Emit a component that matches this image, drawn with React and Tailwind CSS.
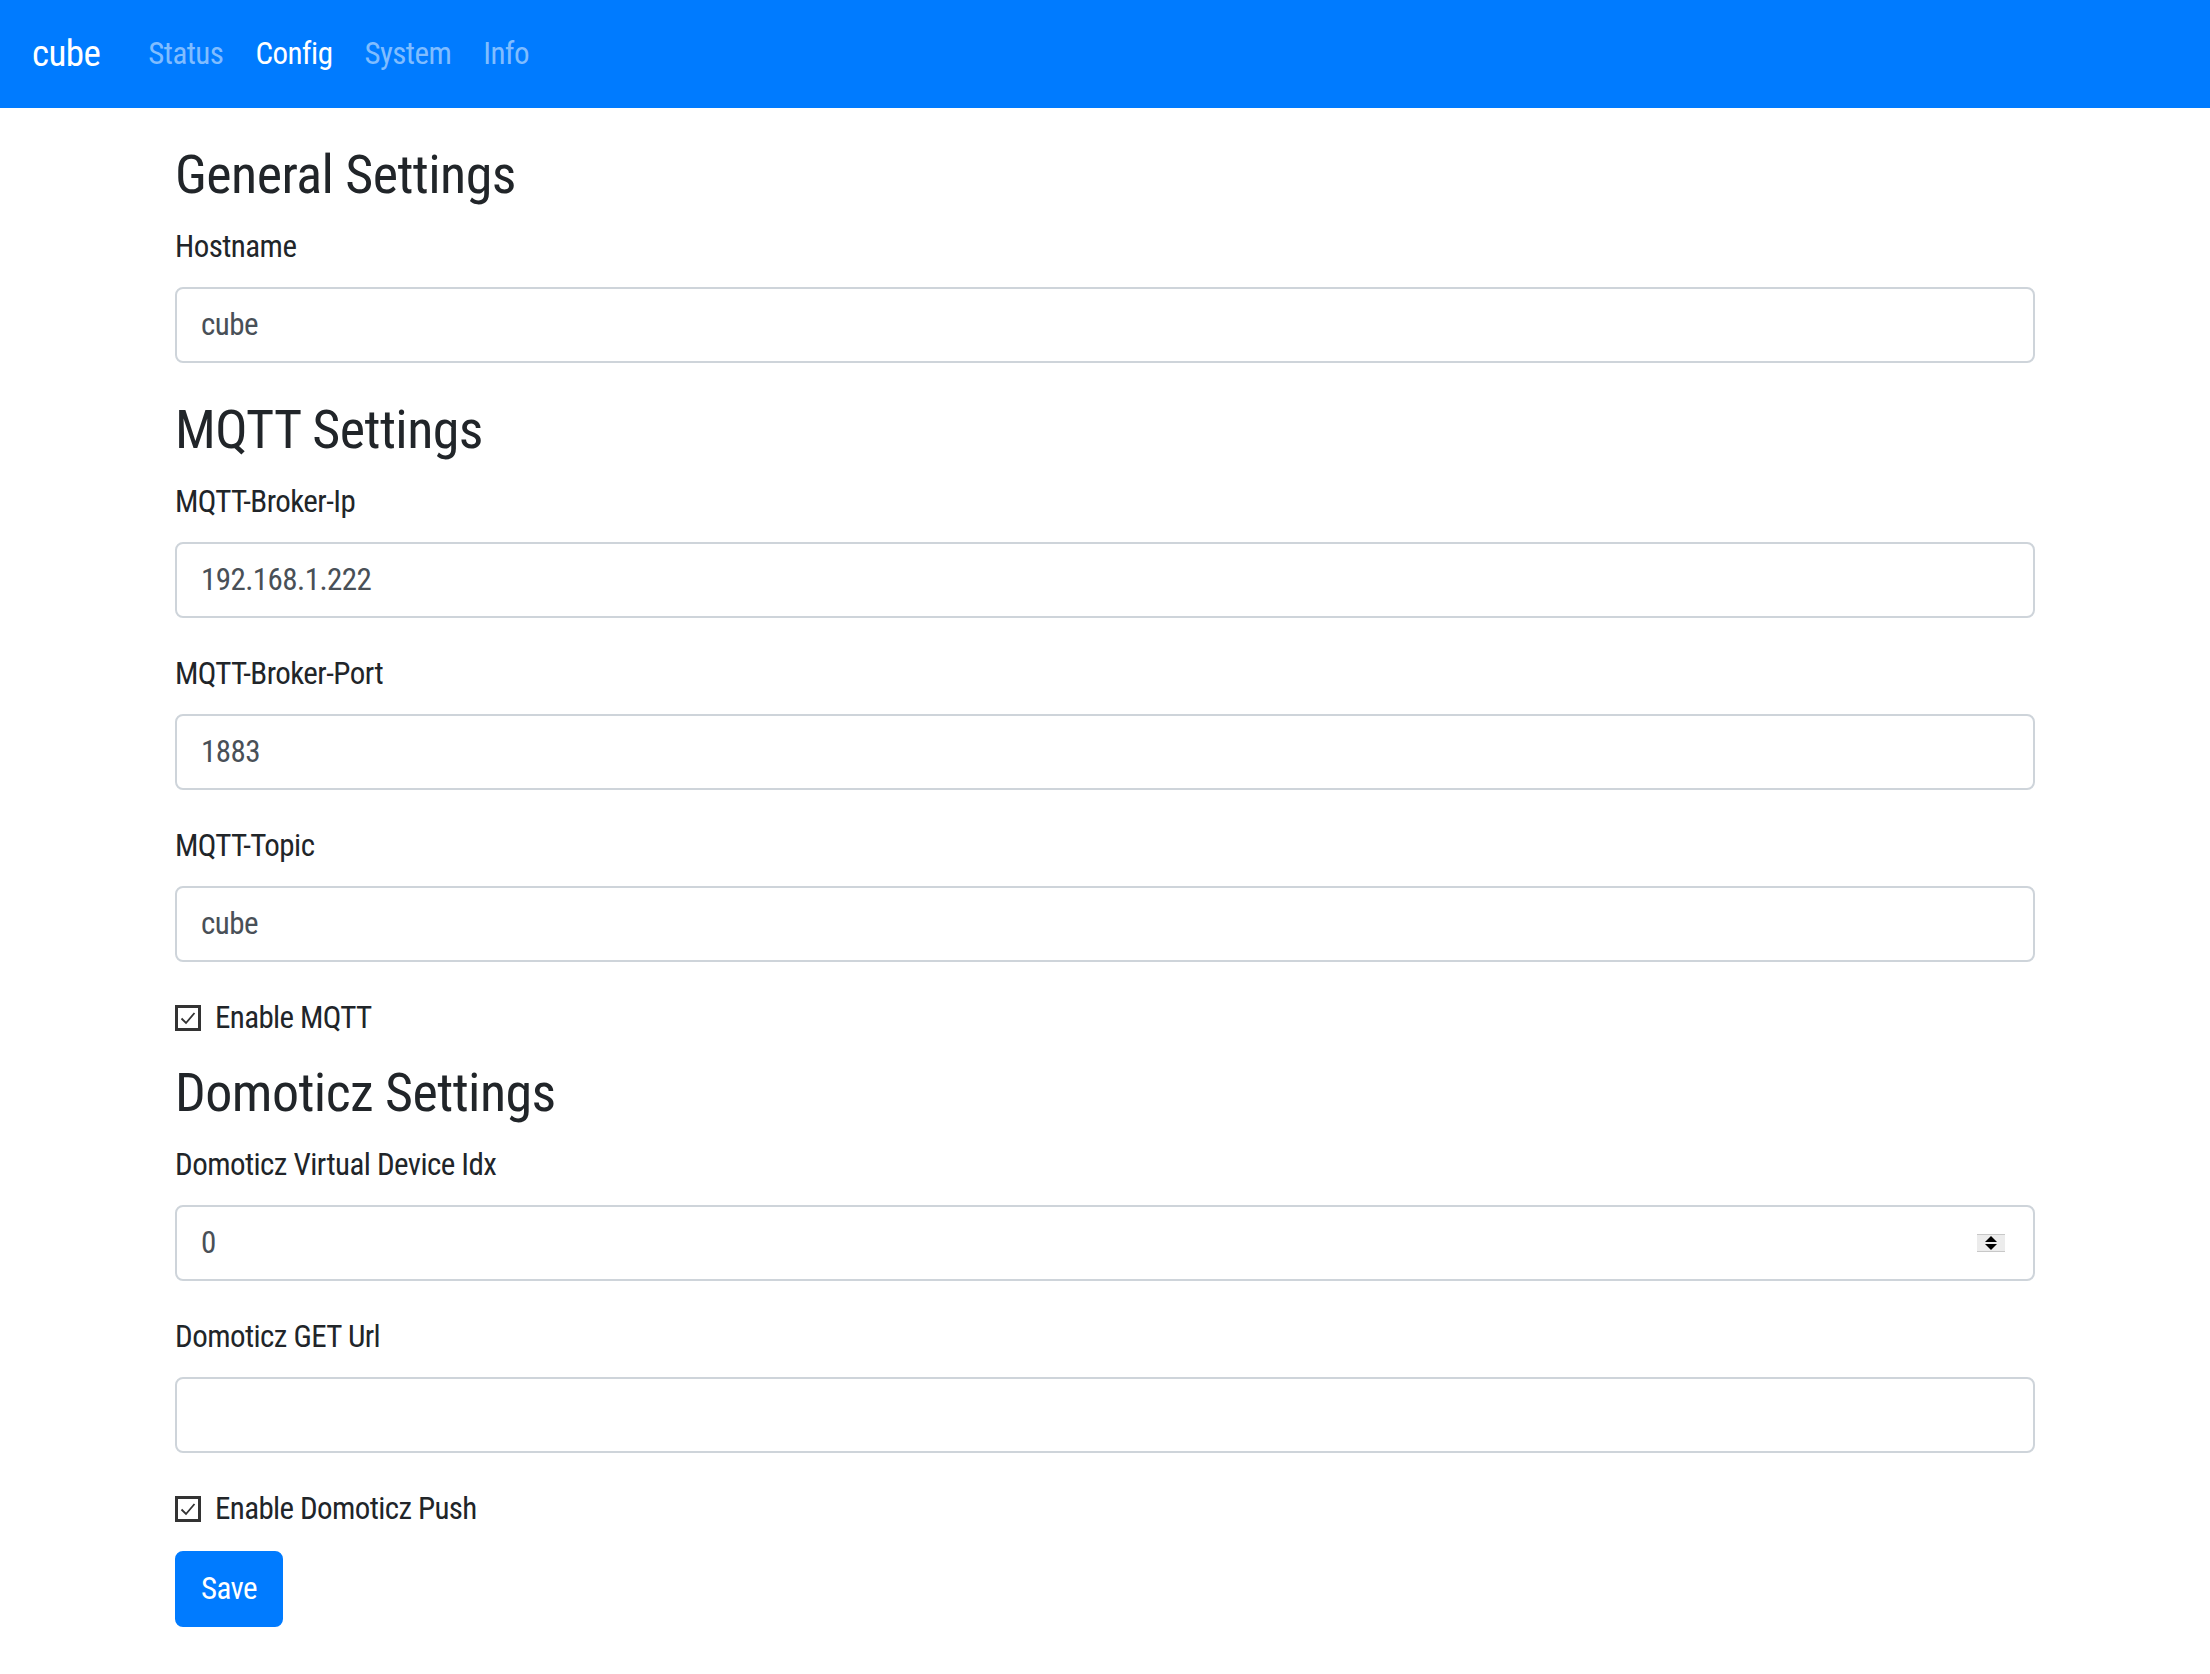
const FONT = "font-['Roboto','Liberation_Sans',sans-serif] font-stretch-[75%] tracking-[-0.035em]";

function Field({ label, value, spinner }) {
  return (
    <div className="mb-[32px]">
      <label className="mb-[16px] block text-[31px] leading-[48px] text-[#212529]">{label}</label>
      <div className="flex h-[76px] w-full items-center rounded-[8px] border-2 border-[#ced4da] bg-white px-[24px] text-[31px] text-[#495057]">
        <span className="flex-1">{value}</span>
        {spinner && (
          <span className="mr-[4px] flex h-[18px] w-[28px] flex-col items-center justify-center gap-[2px] border-y border-[#c8c8c8] bg-[#ececec]">
            <span className="h-0 w-0 border-x-[6px] border-b-[6px] border-x-transparent border-b-black" />
            <span className="h-0 w-0 border-x-[6px] border-t-[6px] border-x-transparent border-t-black" />
          </span>
        )}
      </div>
    </div>
  );
}

function Check({ label }) {
  return (
    <div className="mb-[16px] flex h-[48px] items-center text-[31px] leading-[48px] tracking-[-0.02em] text-[#212529]">
      <span className="mr-[14px] flex h-[26px] w-[26px] items-center justify-center border-[3px] border-[#333] bg-white">
        <svg viewBox="0 0 20 20" className="h-[20px] w-[20px]" fill="none" stroke="#333" strokeWidth="1.8">
          <path d="M3.5 10.5 L8 15 L16.5 5" />
        </svg>
      </span>
      {label}
    </div>
  );
}

function Heading({ children }) {
  return <h3 className="mb-[16px] pt-[3px] text-[54px] leading-[64px] font-normal text-[#212529]">{children}</h3>;
}

export default function App() {
  return (
    <div className={`min-h-screen bg-white ${FONT}`}>
      <nav className="flex h-[108px] items-center bg-[#007bff] px-[32px]">
        <span className="mr-[32px] text-[37px] text-white">cube</span>
        <ul className="flex text-[31px]">
          <li className="px-[16px] text-[#80bdff]">Status</li>
          <li className="px-[16px] text-white">Config</li>
          <li className="px-[16px] text-[#80bdff]">System</li>
          <li className="px-[16px] text-[#80bdff]">Info</li>
        </ul>
      </nav>

      <div className="mx-auto mt-[32px] w-[1920px] px-[30px]">
        <Heading>General Settings</Heading>
        <Field label="Hostname" value="cube" />

        <Heading>MQTT Settings</Heading>
        <Field label="MQTT-Broker-Ip" value="192.168.1.222" />
        <Field label="MQTT-Broker-Port" value="1883" />
        <Field label="MQTT-Topic" value="cube" />
        <Check label="Enable MQTT" />

        <Heading>Domoticz Settings</Heading>
        <Field label="Domoticz Virtual Device Idx" value="0" spinner />
        <Field label="Domoticz GET Url" value="" />
        <Check label="Enable Domoticz Push" />

        <button className="mt-[2px] h-[76px] rounded-[8px] border-2 border-[#007bff] bg-[#007bff] px-[24px] text-[31px] text-white">
          Save
        </button>
      </div>
    </div>
  );
}
